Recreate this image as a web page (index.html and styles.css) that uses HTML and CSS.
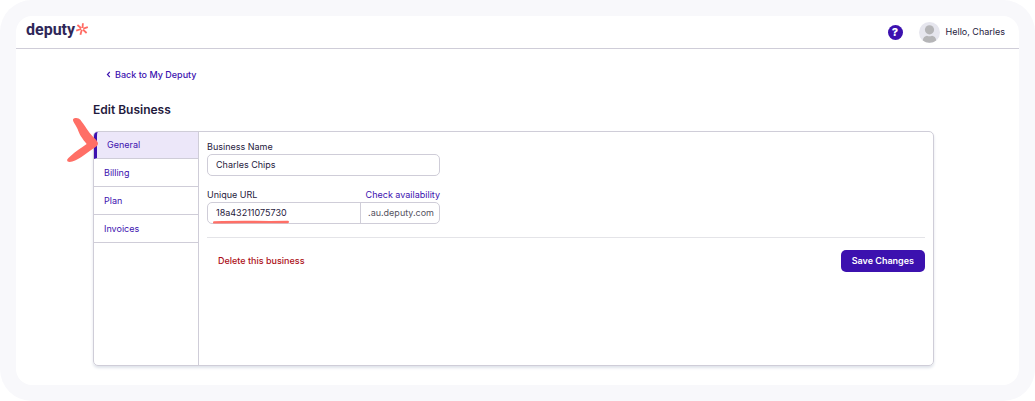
FILE: index.html
```html
<!DOCTYPE html>
<html lang="en">
<head>
<meta charset="utf-8">
<meta name="viewport" content="width=device-width, initial-scale=1">
<title>Edit Business</title>
<link rel="stylesheet" href="styles.css">
</head>
<body>
<div class="frame">
  <div class="app">
    <header class="topbar">
      <a class="logo" href="#" aria-label="deputy home">
        <span class="logo-word">deputy</span>
        <svg class="logo-mark" viewBox="0 0 12 12" aria-hidden="true">
          <g fill="none" stroke="#ff6b63" stroke-width="1.8">
            <path d="M6.5 5 6.9 0.2"/>
            <path d="M7.3 5.6 11.8 4"/>
            <path d="M7 6.6 10.6 10"/>
            <path d="M5.8 6.7 4.4 11.8"/>
            <path d="M5 6 0.2 7.6"/>
            <path d="M5.3 5.2 1.4 2"/>
          </g>
        </svg>
      </a>
      <div class="account">
        <button class="help" type="button" aria-label="Help">?</button>
        <a class="user" href="#">
          <svg class="avatar" viewBox="0 0 21 21" aria-hidden="true">
            <circle cx="10.5" cy="10.5" r="10.5" fill="#e6e6ee"/>
            <circle cx="10.5" cy="7.8" r="4.6" fill="#b5b5b7"/>
            <path d="M3.8 18.4C4 15.4 6 13.9 8 13.7Q10.5 14.9 13 13.7C15 13.9 17 15.4 17.2 18.4A10.5 10.5 0 0 1 3.8 18.4Z" fill="#b5b5b7"/>
          </svg>
          <span>Hello, Charles</span>
        </a>
      </div>
    </header>
    <main class="page">
      <a class="back" href="#">
        <svg class="chevron" viewBox="0 0 5 8" aria-hidden="true"><path d="M3.8 1 1.4 3.5l2.4 2.5" fill="none" stroke="#3c11af" stroke-width="1.1"/></svg>
        Back to My Deputy
      </a>
      <h1 class="title">Edit Business</h1>
      <div class="panel">
        <nav class="tabs" aria-label="Business settings">
          <a class="tab tab-active" href="#" aria-current="page">General</a>
          <a class="tab" href="#">Billing</a>
          <a class="tab" href="#">Plan</a>
          <a class="tab" href="#">Invoices</a>
        </nav>
        <svg class="pointer" viewBox="0 0 102 138" aria-hidden="true">
          <path d="M24 13C23 8 27 5 34 6Q42 6 46 11C52 20 60 28 66 40Q72 50 84 62Q96 72 99 81Q100 88 93 92C78 102 62 114 48 124C36 132 24 137 14 138Q6 138 6 132Q8 127 16 121C32 106 48 96 65 84C52 68 46 60 40 45C36 32 25 20 24 13Z" fill="#ff6f66"/>
        </svg>
        <form class="form">
          <div class="fields">
            <div class="field">
              <label class="label" for="name">Business Name</label>
              <input class="input" id="name" type="text" value="Charles Chips">
            </div>
            <div class="field">
              <div class="label-row">
                <label class="label" for="url">Unique URL</label>
                <a class="check" href="#">Check availability</a>
              </div>
              <div class="group">
                <input class="group-input" id="url" type="text" value="18a43211075730">
                <span class="suffix">.au.deputy.com</span>
                <svg class="underline" viewBox="0 0 76 4" aria-hidden="true"><path d="M1.2 2.4Q24 1.8 40 2T74.8 2" fill="none" stroke="#ff6f66" stroke-width="2.4" stroke-linecap="round"/></svg>
              </div>
            </div>
          </div>
          <div class="actions">
            <button class="delete" type="button">Delete this business</button>
            <button class="save" type="submit">Save Changes</button>
          </div>
        </form>
      </div>
    </main>
  </div>
</div>
</body>
</html>
```

FILE: styles.css
```css
* { box-sizing: border-box; }

body {
  margin: 0;
  background: #fff;
  color: #1f1a3d;
  font: 400 9px/12px Inter, "Liberation Sans", sans-serif;
}

a { color: #3c11af; text-decoration: none; }

button, input { font: inherit; color: inherit; margin: 0; }

.frame {
  display: flex;
  min-height: 100vh;
  padding: 16px;
  background: #f8f8fb;
  border-radius: 32px;
}

.app {
  flex: 1;
  background: #fff;
  border-radius: 16px;
}

.topbar {
  display: flex;
  align-items: center;
  justify-content: space-between;
  height: 33px;
  padding: 0 14px 0 10px;
  border-bottom: 1px solid #cfcdd8;
}

.logo {
  display: flex;
  align-items: flex-start;
  gap: 1px;
  padding-bottom: 4px;
}

.logo-word {
  color: #2f2758;
  font: 700 16px/20px Roboto, sans-serif;
}

.logo-mark { width: 12px; height: 12px; margin-top: 3px; }

.account { display: flex; align-items: center; gap: 16px; }

.help {
  width: 15px;
  height: 15px;
  padding: 0;
  border: 0;
  border-radius: 50%;
  background: #3c11af;
  color: #fff;
  font-size: 11px;
  font-weight: 800;
  line-height: 15px;
}

.user { display: flex; align-items: center; gap: 6px; color: #1f1a3d; }

.avatar { width: 21px; height: 21px; }

.page { padding: 20px 85px 19px 77px; }

.back {
  display: inline-flex;
  align-items: center;
  gap: 4px;
  margin-left: 13px;
  font-weight: 500;
}

.chevron { width: 5px; height: 8px; }

.title {
  margin: 20px 0 13px;
  font-size: 12px;
  font-weight: 600;
  line-height: 16px;
}

.panel {
  position: relative;
  display: flex;
  min-height: 235px;
  border: 1px solid #cfcdd8;
  border-radius: 5px;
  box-shadow: 0 2px 3px #dfe3ea;
}

.tabs { flex: 0 0 105px; border-right: 1px solid #cfcdd8; }

.tab {
  display: flex;
  align-items: center;
  height: 28px;
  padding-left: 10px;
  border-bottom: 1px solid #cfcdd8;
}

.tab-active {
  height: 27px;
  border-left: 3px solid #3c11af;
  border-top-left-radius: 4px;
  background: #ece7f9;
}

.pointer {
  position: absolute;
  left: -29px;
  top: -16px;
  width: 34px;
  height: 46px;
}

.form { flex: 1; padding: 9px 8px; }

.fields {
  display: grid;
  gap: 13px;
  padding-bottom: 13px;
  border-bottom: 1px solid #e4e4e8;
}

.field {
  display: grid;
  grid-template-columns: minmax(0, 1fr);
  gap: 1px;
  width: 233px;
}

.label-row { display: flex; justify-content: space-between; }

.input, .group {
  width: 100%;
  height: 22px;
  border: 1px solid #cfcdd8;
  border-radius: 5px;
  background: #fff;
}

.input { padding: 0 8px 1px; }

.group { position: relative; display: flex; }

.group-input {
  flex: 1;
  min-width: 0;
  padding: 0 8px;
  border: 0;
  background: none;
}

.suffix {
  padding: 4px 5px 4px 7px;
  border-left: 1px solid #cfcdd8;
  color: #55535f;
}

.underline {
  position: absolute;
  left: 5px;
  bottom: -1px;
  width: 76px;
  height: 4px;
}

.actions {
  display: flex;
  justify-content: space-between;
  padding-top: 12px;
}

.delete {
  padding: 0 11px;
  border: 0;
  background: none;
  color: #ac1018;
  font-weight: 500;
}

.save {
  height: 22px;
  padding: 0 11px;
  border: 0;
  border-radius: 5px;
  background: #3c11af;
  color: #fff;
  font-weight: 600;
}
```
